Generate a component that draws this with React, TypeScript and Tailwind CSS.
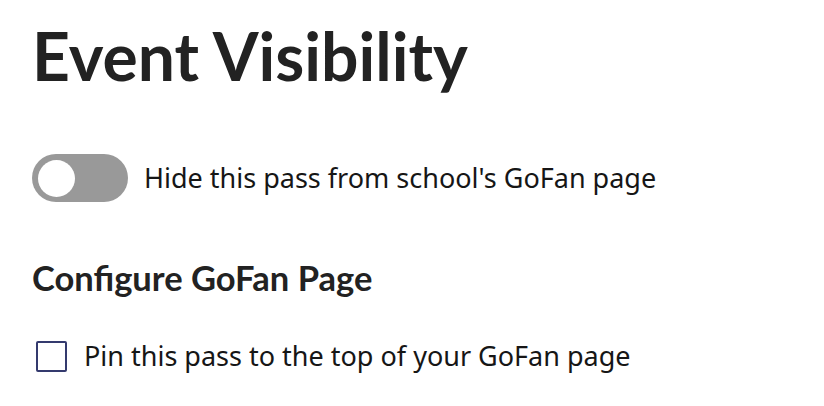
import { useState } from "react";

export default function App() {
    const [hidden, setHidden] = useState(false);
    const [pinned, setPinned] = useState(false);

    return (
        <div className="min-h-screen bg-white px-8 pt-[18px] text-[#161616]">
            <h1 className="font-['Lato',sans-serif] text-[66px] font-bold leading-[76px] text-[#222222]">
                Event Visibility
            </h1>

            {/* toggle */}
            <div className="mt-[60px] flex items-center gap-[16px]">
                <button
                    onClick={() => setHidden(!hidden)}
                    className={`flex h-12 w-24 items-center rounded-full px-[6px] ${hidden ? "justify-end bg-[#24a148]" : "justify-start bg-[#999999]"}`}
                >
                    <span className="h-[37px] w-[37px] rounded-full bg-white" />
                </button>
                <span className="font-['Noto_Sans',sans-serif] text-[27px] leading-[36px]">
                    Hide this pass from school's GoFan page
                </span>
            </div>

            <h2 className="mt-[54px] font-['Lato',sans-serif] text-[34.5px] font-bold leading-[44px] text-[#222222]">
                Configure GoFan Page
            </h2>

            {/* checkbox */}
            <label className="ml-1 mt-[38px] flex cursor-pointer items-center gap-[17px]">
                <input type="checkbox" checked={pinned} onChange={() => setPinned(!pinned)} className="sr-only" />
                <span className="h-[31px] w-[31px] rounded-[2px] border-2 border-[#343a6e]" />
                <span className="font-['Noto_Sans',sans-serif] text-[27px] leading-[36px]">
                    Pin this pass to the top of your GoFan page
                </span>
            </label>
        </div>
    );
}
